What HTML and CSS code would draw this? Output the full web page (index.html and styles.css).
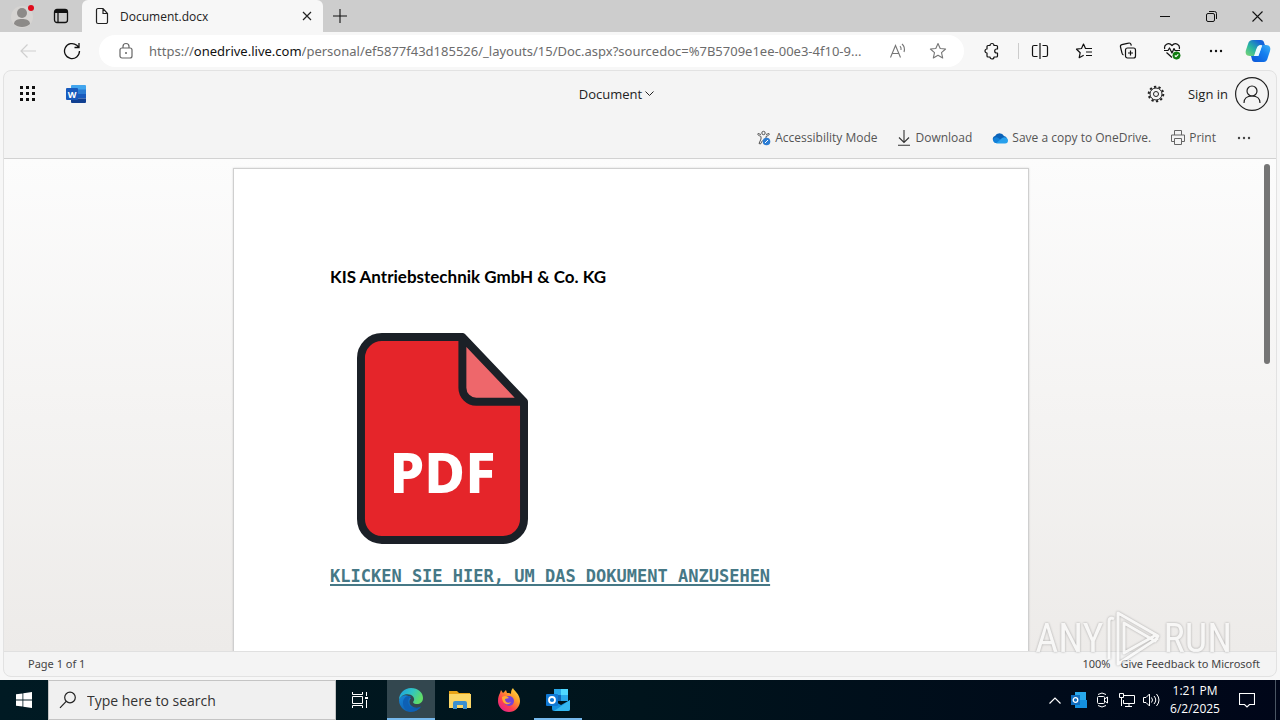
FILE: index.html
```html
<!DOCTYPE html>
<html lang="en">
<head>
    <meta charset="UTF-8">
    <meta name="viewport" content="width=device-width, initial-scale=1.0">
    <title>Document.docx</title>
    <link rel="stylesheet" href="styles.css">
</head>
<body>
    <div class="tab-strip">
        <button class="strip-btn" aria-label="Profile">
            <svg width="28" height="28" viewBox="0 0 28 28"><circle cx="13" cy="15" r="11" fill="#d6d4d2"/><circle cx="13" cy="11" r="5" fill="#8c8a88"/><path d="M5 22c0-4 4-5 8-5s8 1 8 5c-2 2-5 3-8 3s-6-1-8-3z" fill="#8c8a88"/><circle cx="22" cy="6" r="3" fill="#e00b1c"/></svg>
        </button>
        <button class="strip-btn" aria-label="Tab actions">
            <svg width="16" height="16" viewBox="0 0 16 16" fill="none" stroke="#111" stroke-width="1.3"><rect x="1.5" y="1.5" width="13" height="13" rx="2.5"/><path d="M2 3.5h12" stroke-width="3"/><path d="M5 5v9"/></svg>
        </button>
        <div class="tab">
            <svg width="14" height="18" viewBox="0 0 14 18" fill="none" stroke="#222" stroke-width="1.2"><path d="M3 1.5h5l4.500 5v8.500a1.500 1.500 0 0 1-1.500 1.500H3A1.500 1.500 0 0 1 1.500 15V3A1.500 1.500 0 0 1 3 1.500zM8 1.500V6.500h4.500"/></svg>
            <span class="tab-title">Document.docx</span>
            <button class="tab-close" aria-label="Close tab">
                <svg width="10" height="10" viewBox="0 0 10 10" stroke="#222" stroke-width="1.2"><path d="M1 1l8 8M9 1L1 9"/></svg>
            </button>
        </div>
        <button class="new-tab" aria-label="New tab">
            <svg width="14" height="14" viewBox="0 0 14 14" stroke="#111" stroke-width="1.1"><path d="M7 0v14M0 7h14"/></svg>
        </button>
        <div class="window-controls">
            <button aria-label="Minimize"><svg width="10" height="10" viewBox="0 0 10 10" stroke="#111"><path d="M0 5.500h10"/></svg></button>
            <button aria-label="Restore"><svg width="11" height="11" viewBox="0 0 11 11" fill="none" stroke="#111"><rect x=".5" y="2.500" width="8" height="8" rx="1.500"/><path d="M3 .5h5.500a2 2 0 0 1 2 2V8"/></svg></button>
            <button aria-label="Close"><svg width="11" height="11" viewBox="0 0 11 11" stroke="#111" stroke-width="1.1"><path d="M.5.5l10 10M10.500.5l-10 10"/></svg></button>
        </div>
    </div>

    <div class="toolbar">
        <button class="tool" aria-label="Back" disabled>
            <svg width="18" height="16" viewBox="0 0 18 16" fill="none" stroke="#cfcfcf" stroke-width="1.2"><path d="M17 8H2M8.500 1.500L2 8l6.500 6.500"/></svg>
        </button>
        <button class="tool" aria-label="Refresh">
            <svg width="18" height="18" viewBox="0 0 18 18" fill="none" stroke="#111" stroke-width="1.3"><path d="M16.500 9A7.500 7.500 0 1 1 13.800 3.300L15.800 5.200M16 1v4.500h-4.500"/></svg>
        </button>
        <form class="address">
            <svg width="14" height="18" viewBox="0 0 14 18" fill="none" stroke="#666" stroke-width="1.2"><rect x="1" y="6" width="12" height="10" rx="2"/><path d="M4 6V4.500a3 3 0 0 1 6 0V6"/><circle cx="7" cy="11" r="1" fill="#666" stroke="none"/></svg>
            <label class="address-text" for="url">https://<span class="host">onedrive.live.com</span></label>
            <input type="text" id="url" value="/personal/ef5877f43d185526/_layouts/15/Doc.aspx?sourcedoc=%7B5709e1ee-00e3-4f10-9...">
            <button type="button" aria-label="Read aloud">
                <svg width="18" height="16" viewBox="0 0 18 16" fill="none" stroke="#767676" stroke-width="1.1"><path d="M1.500 14.500L6.500 2.500l5 12M3.200 10.500h6.600M11 3.200q1.500 1.500 1 3.800M13 1q3.500 3 2 8"/></svg>
            </button>
            <button type="button" aria-label="Add to favorites">
                <svg width="18" height="18" viewBox="0 0 18 18" fill="none" stroke="#767676" stroke-width="1.1" stroke-linejoin="round"><path d="M9 1.500l2.200 5 5.400.5-4.100 3.600 1.200 5.400L9 13.200 4.300 16l1.200-5.400L1.400 7l5.400-.5z"/></svg>
            </button>
        </form>
        <div class="tools">
            <button class="tool" aria-label="Extensions">
                <svg width="18" height="18" viewBox="0 0 18 18" fill="none" stroke="#111" stroke-width="1.2" stroke-linejoin="round"><path d="M5 3.500h2a2 2 0 0 1 4 0h2.500a1 1 0 0 1 1 1V7h-.8a2 2 0 0 0 0 4h.8v3a1 1 0 0 1-1 1H11a2 2 0 0 1-4 0H5a1 1 0 0 1-1-1v-3a2 2 0 0 1 0-4V4.500a1 1 0 0 1 1-1z"/></svg>
            </button>
            <span class="divider"></span>
            <button class="tool" aria-label="Split screen">
                <svg width="18" height="18" viewBox="0 0 18 18" fill="none" stroke="#111" stroke-width="1.2"><path d="M9 1v16M6.500 3.500H3A1.500 1.500 0 0 0 1.500 5v8A1.500 1.500 0 0 0 3 14.500h3.500M11.500 3.500H15A1.500 1.500 0 0 1 16.500 5v8a1.500 1.500 0 0 1-1.500 1.500h-3.500"/></svg>
            </button>
            <button class="tool" aria-label="Favorites">
                <svg width="18" height="18" viewBox="0 0 18 18" fill="none" stroke="#111" stroke-width="1.2" stroke-linejoin="round"><path d="M11 6.500h-.5L8.500 2 6.500 6.500 1.500 7.200l3.700 3.500-1 5 4.500-2.500M11 6.500h6M11 10h6M11 13.500h6"/></svg>
            </button>
            <button class="tool" aria-label="Collections">
                <svg width="18" height="18" viewBox="0 0 18 18" fill="none" stroke="#111" stroke-width="1.2"><rect x="6.500" y="6" width="10" height="10" rx="2"/><path d="M11.500 8.500v5M9 11h5M4.500 13A2.500 2.500 0 0 1 3 11L1.500 5a2 2 0 0 1 1.400-2.400l6.600-1.500A2 2 0 0 1 12 2.500l.3 1.200"/></svg>
            </button>
            <button class="tool" aria-label="Browser essentials">
                <svg width="18" height="18" viewBox="0 0 18 18" fill="none" stroke="#111" stroke-width="1.2" stroke-linejoin="round"><path d="M1.800 7C.5 3 5.500-.5 9 3.500c3.500-4 8.500-.5 7.200 3.500M1 8.500h4L6.500 6l2.500 5 2-4.500 1 2h5M3.500 10.500L9 15.500"/><circle cx="13.500" cy="13.500" r="3.700" fill="#107c10" stroke="#107c10" stroke-width=".6"/><path d="M11.800 13.500l1.200 1.200 2.300-2.300" stroke="#fff"/></svg>
            </button>
            <button class="tool" aria-label="Settings and more">
                <svg width="16" height="4" viewBox="0 0 16 4" fill="#111"><circle cx="3" cy="2" r="1.200"/><circle cx="8" cy="2" r="1.200"/><circle cx="13" cy="2" r="1.200"/></svg>
            </button>
            <button class="tool copilot" aria-label="Copilot">
                <svg width="26" height="24" viewBox="0 0 26 24">
                    <defs>
                        <linearGradient id="cp1" x1="0" y1="1" x2="1" y2="0"><stop offset="0" stop-color="#7fd672"/><stop offset=".4" stop-color="#2ab7a0"/><stop offset=".8" stop-color="#1664d9"/></linearGradient>
                        <linearGradient id="cp2" x1="0" y1="1" x2="1" y2="0"><stop offset="0" stop-color="#0b53d6"/><stop offset=".6" stop-color="#1480f0"/><stop offset="1" stop-color="#41b3f5"/></linearGradient>
                    </defs>
                    <path d="M8 1h8c3 0 3 3 4 5h-4c-3 0-4 2-5 5l-2 6H5c-4 0-5-3-4-6l2-6c1-3 2-4 5-4z" fill="url(#cp1)"/>
                    <path d="M18 23h-8c-3 0-3-3-4-6h4c3 0 4-2 5-5l2-6h4c4 0 5 3 4 6l-2 6c-1 4-2 5-5 5z" fill="url(#cp2)"/>
                    <path d="M13 7h4l-3.500 10H9.500z" fill="#e8fbff"/>
                </svg>
            </button>
        </div>
    </div>

    <main class="viewer">
        <header class="app-header">
            <div class="app-left">
                <button class="app-btn" aria-label="App launcher">
                    <svg width="16" height="16" viewBox="0 0 16 16" fill="#111"><path d="M0 0h3v3H0zM6 0h3v3H6zM12 0h3v3h-3zM0 6h3v3H0zM6 6h3v3H6zM12 6h3v3h-3zM0 12h3v3H0zM6 12h3v3H6zM12 12h3v3h-3z"/></svg>
                </button>
                <a class="word-logo" href="#" aria-label="Word">
                    <svg width="20" height="18" viewBox="0 0 20 18"><path d="M6 0h13a1 1 0 0 1 1 1v4H5V1a1 1 0 0 1 1-1z" fill="#41a5ee"/><path d="M5 4.500h15V9H5z" fill="#2b7cd3"/><path d="M5 9h15v4.500H5z" fill="#185abd"/><path d="M5 13.500h15V17a1 1 0 0 1-1 1H6a1 1 0 0 1-1-1z" fill="#103f91"/><rect y="3" width="12" height="12" rx="1" fill="#185abd"/><text x="6" y="12.500" class="logo-letter">W</text></svg>
                </a>
            </div>
            <button class="doc-name">Document
                <svg width="9" height="6" viewBox="0 0 9 6" fill="none" stroke="#222"><path d="M.5.5l4 4 4-4"/></svg>
            </button>
            <div class="app-right">
                <button class="app-btn" aria-label="Settings">
                    <svg width="18" height="18" viewBox="0 0 18 18" fill="none" stroke="#222"><circle cx="9" cy="9" r="2.500"/><circle cx="9" cy="9" r="6"/><circle cx="9" cy="9" r="7.300" stroke-width="2" stroke-dasharray="2.300 2.287"/></svg>
                </button>
                <button class="sign-in">Sign in
                    <svg width="34" height="34" viewBox="0 0 34 34" fill="none" stroke="#222" stroke-width="1.200"><circle cx="17" cy="17" r="16.400"/><circle cx="17" cy="14" r="5"/><path d="M9 26c0-5 3.500-7 8-7s8 2 8 7"/></svg>
                </button>
            </div>
        </header>

        <nav class="commands">
            <button>
                <svg width="14" height="16" viewBox="0 0 14 16" fill="none" stroke="#555"><circle cx="6.500" cy="3" r="1.700"/><path d="M1 3.500c-1 1.500 1 2 3 3V9l-2 4.500 1.500.5 2-3.500M12 3.500c1 1.500-1 2-3 3V8M1 3.500l3 1M12 3.500l-3 1" /><circle cx="9.500" cy="11.500" r="3.800" fill="#2b7cd3" stroke="none"/><path d="M8 13l3-3" stroke="#fff"/></svg>
                Accessibility Mode
            </button>
            <button>
                <svg width="14" height="16" viewBox="0 0 14 16" fill="none" stroke="#333" stroke-width="1.100"><path d="M7 0v12.500M2 7.500l5 5 5-5M1 15.300h12"/></svg>
                Download
            </button>
            <button>
                <svg width="16" height="12" viewBox="0 0 16 12"><path d="M1 8a3 3 0 0 1 2-4 5 5 0 0 1 9 0 3.500 3.500 0 0 1 2 6L8 11z" fill="#0a62b8"/><path d="M3 11a3 3 0 0 1-1-5c2-1.500 4-.5 5 .5l6 4.500z" fill="#1280d8"/><path d="M4 11.500l6-5.500c3-2 6 0 6 2.500a3 3 0 0 1-3 3z" fill="#28a0ec"/></svg>
                Save a copy to OneDrive.
            </button>
            <button>
                <svg width="14" height="15" viewBox="0 0 14 15" fill="none" stroke="#666"><path d="M3.500 5V.5h7V5M3.500 11.500h-3V5h13v6.500h-3M3.500 8.500h7v6h-7z"/></svg>
                Print
            </button>
            <button aria-label="More options">
                <svg width="16" height="4" viewBox="0 0 16 4" fill="#444"><circle cx="3" cy="2" r="1.200"/><circle cx="8" cy="2" r="1.200"/><circle cx="13" cy="2" r="1.200"/></svg>
            </button>
        </nav>

        <section class="canvas">
            <article class="page">
                <h1>KIS Antriebstechnik GmbH &amp; Co. KG</h1>
                <svg class="pdf-icon" width="171" height="211" viewBox="0 0 172 212" role="img" aria-label="PDF">
                    <path d="M24 4h82l62 65v118a21 21 0 0 1-21 21H25a21 21 0 0 1-21-21V25A21 21 0 0 1 24 4z" fill="#e5252a"/>
                    <path d="M106 4v51a14 14 0 0 0 14 14h48z" fill="#ee676b"/>
                    <path d="M25 4h81l62 65v118a21 21 0 0 1-21 21H25a21 21 0 0 1-21-21V25A21 21 0 0 1 25 4zM106 4v51a14 14 0 0 0 14 14h48" fill="none" stroke="#1b2027" stroke-width="8" stroke-linejoin="round"/>
                    <text x="86" y="161" class="pdf-label">PDF</text>
                </svg>
                <a class="doc-link" href="#">KLICKEN SIE HIER, UM DAS DOKUMENT ANZUSEHEN</a>
            </article>
            <span class="scroll-thumb"></span>
        </section>

        <footer class="status">
            <span>Page 1 of 1</span>
            <div class="status-right">
                <span>100%</span>
                <a href="#">Give Feedback to Microsoft</a>
            </div>
        </footer>
    </main>

    <div class="taskbar">
        <button class="start" aria-label="Start">
            <svg width="16" height="16" viewBox="0 0 16 16" fill="#fff"><path d="M0 2.300L6.500 1.400v6.200H0zM7.300 1.300L16 0v7.600H7.300zM0 8.400h6.500v6.200L0 13.700zM7.300 8.400H16V16l-8.700-1.300z"/></svg>
        </button>
        <div class="search">
            <svg width="18" height="18" viewBox="0 0 18 18" fill="none" stroke="#222" stroke-width="1.200"><circle cx="11" cy="6.500" r="5.300"/><path d="M7.200 10.300L1 16.800"/></svg>
            <input type="text" aria-label="Search" placeholder="Type here to search">
        </div>
        <div class="apps">
            <button aria-label="Task view">
                <svg width="18" height="16" viewBox="0 0 18 16" fill="none" stroke="#fff"><path d="M1.500 0v2.500h10V0M1.500 16v-2.500h10V16M1.500 4.500h10v7h-10zM15.500 0v4M15.500 8v8"/><path d="M14 5h3v2h-3z" fill="#fff" stroke="none"/></svg>
            </button>
            <button class="active" aria-label="Edge">
                <svg width="24" height="24" viewBox="0 0 24 24">
                    <defs>
                        <linearGradient id="edge1" x1="0" y1="0" x2="1" y2=".4"><stop offset="0" stop-color="#1b9de2"/><stop offset=".55" stop-color="#30c4c4"/><stop offset="1" stop-color="#5fdc68"/></linearGradient>
                        <linearGradient id="edge2" x1="0" y1="0" x2="1" y2="1"><stop offset="0" stop-color="#1687d9"/><stop offset="1" stop-color="#0c4f9e"/></linearGradient>
                    </defs>
                    <path d="M0 12a12 12 0 0 0 15 11.600c3-.8 5.500-2.600 7-5-3 1.500-7 1.500-9.500-.8C10 15.500 10 12 12 10.500 9 6 3 6 0 12z" fill="url(#edge2)"/>
                    <path d="M0 12C0 5 5.500 0 12 0c7 0 12 4.500 12 10 0 4-3 6-6 6-3.500 0-4.500-1.500-3.500-2.700 1-1.300.8-3.300-.5-4.800C11 5 3 5 0 12z" fill="url(#edge1)"/>
                    <path d="M4 15c0-5 4-8 8-6.500-4 2-4 10 2 12.500 2 .8 5 .3 8-2.400-5 8-18 6-18-3.600z" fill="#0e60b4"/>
                </svg>
            </button>
            <button aria-label="File Explorer">
                <svg width="22" height="20" viewBox="0 0 22 20"><path d="M0 1h8l2 2h11v4H0z" fill="#e8a317"/><path d="M0 4h22v14H0z" fill="#fbd667"/><path d="M4 19v-6a2 2 0 0 1 2-2h10a2 2 0 0 1 2 2v6h-4v-4H8v4z" fill="#3a8fd0"/></svg>
            </button>
            <button aria-label="Firefox">
                <svg width="24" height="24" viewBox="0 0 24 24">
                    <defs><linearGradient id="fox" x1="1" y1="0" x2=".2" y2="1"><stop offset="0" stop-color="#fff04a"/><stop offset=".4" stop-color="#ff9a2a"/><stop offset=".7" stop-color="#ff4050"/><stop offset="1" stop-color="#e3208e"/></linearGradient></defs>
                    <path d="M1 13C1 9 2 7 3 5l1-3 2 3 3-3 1 3c2 0 3 0 4 1 0-2 0-4 2-6 1 3 7 6 7 13a11 11 0 0 1-22 0z" fill="url(#fox)"/>
                    <circle cx="12" cy="13" r="5" fill="#7542d8"/><path d="M5 9c3-2 5-1 7 1l-4 1c0 3 3 5 6 3-2 4-9 3-9-5z" fill="#ffac32"/>
                </svg>
            </button>
            <button class="running" aria-label="Outlook">
                <svg width="24" height="22" viewBox="0 0 24 22"><rect x="8" width="14" height="12" fill="#1066b5"/><path d="M8 0h7v6H8zM15 6h7v6h-7z" fill="#28a8ea"/><path d="M15 0h7v6h-7z" fill="#50d9ff"/><path d="M6 11l9 5 9-5v9a2 2 0 0 1-2 2H8a2 2 0 0 1-2-2z" fill="#1490df"/><path d="M24 11v9a2 2 0 0 1-2 2H8z" fill="#35b8f1"/><rect y="5" width="12" height="12" rx="1" fill="#0f78d4"/><circle cx="6" cy="11" r="3" fill="none" stroke="#fff" stroke-width="1.800"/></svg>
            </button>
        </div>
        <div class="tray">
            <button aria-label="Show hidden icons"><svg width="12" height="7" viewBox="0 0 12 7" fill="none" stroke="#fff" stroke-width="1.200"><path d="M.5 6.500L6 1l5.500 5.500"/></svg></button>
            <button aria-label="Outlook"><svg width="16" height="16" viewBox="0 0 16 16"><rect x="4" width="11" height="15" fill="#28a8ea"/><path d="M4 8l12 0v8H4z" fill="#1490df"/><rect y="3" width="9" height="10" fill="#0f6cbd"/><circle cx="4.500" cy="8" r="2.300" fill="none" stroke="#fff" stroke-width="1.300"/></svg></button>
            <button aria-label="Meet now"><svg width="14" height="16" viewBox="0 0 14 16" fill="none" stroke="#fff"><rect x="1.500" y="4.500" width="7" height="7" rx="1"/><path d="M8.500 7l3-2v6l-3-2M2 2.500q4-3 8 0M2 13.500q4 3 8 0"/></svg></button>
            <button aria-label="Network"><svg width="16" height="14" viewBox="0 0 16 14" fill="none" stroke="#fff"><path d="M5 2.500h10.500v8H4.500V7M10 10.500v3M6 13.500h7M.5.5h4v4h-4zM2.500 4.500v8.500"/></svg></button>
            <button aria-label="Volume"><svg width="17" height="14" viewBox="0 0 17 14" fill="none" stroke="#fff"><path d="M.5 4.500H3l3.500-3.500v12L3 9.500H.5zM8.500 4.500q2 2.500 0 5M11 3q3.500 4 0 8M13.500 1q5 6 0 12"/></svg></button>
        </div>
        <button class="clock">1:21 PM<br>6/2/2025</button>
        <button class="notify" aria-label="Notifications"><svg width="16" height="16" viewBox="0 0 16 16" fill="none" stroke="#fff" stroke-width="1.100"><path d="M.5 1.500h15v11h-5L8 15l-2.500-2.500h-5z"/></svg></button>
        <span class="show-desktop"></span>
    </div>

    <div class="watermark">
        <span>ANY</span>
        <svg width="56" height="58" viewBox="0 0 56 58" fill="none" stroke="#fff" stroke-width="3" stroke-linejoin="round"><path d="M3 49V11q0-3 3-3l2 1"/><path d="M12 50V3l40 23-3 5-31-18v30L50 25"/><path d="M12 50v4l40-26"/></svg>
        <span>RUN</span>
    </div>
</body>
</html>
```
FILE: styles.css
```css
* {
    box-sizing: border-box;
}

body {
    margin: 0;
    min-height: 100vh;
    height: 100vh;
    display: flex;
    flex-direction: column;
    font-family: "Open Sans", "Noto Sans", sans-serif;
    font-size: 12px;
    color: #222;
    background-color: #f7f7f7;
    overflow: hidden;
}

button,
input {
    font: inherit;
    color: inherit;
    background: none;
    border: none;
    padding: 0;
    margin: 0;
    outline: none;
}

button {
    display: flex;
    align-items: center;
    justify-content: center;
}

svg {
    display: block;
    flex-shrink: 0;
}

a {
    color: inherit;
    text-decoration: none;
}

/* tab strip */
.tab-strip {
    display: flex;
    height: 32px;
    flex-shrink: 0;
    background-color: #cdcdcd;
    padding-left: 4px;
}

.strip-btn {
    width: 38px;
}

.tab {
    display: flex;
    align-items: center;
    gap: 11px;
    width: 241px;
    margin-left: 2px;
    padding: 0 10px 0 13px;
    background-color: #f7f7f7;
    border-radius: 6px 6px 0 0;
}

.tab-title {
    flex: 1;
}

.tab-close {
    width: 12px;
    height: 16px;
}

.new-tab {
    width: 34px;
}

.window-controls {
    display: flex;
    margin-left: auto;
}

.window-controls button {
    width: 46px;
}

/* toolbar */
.toolbar {
    display: flex;
    align-items: center;
    height: 38px;
    flex-shrink: 0;
    padding: 0 0 0 6px;
    background-color: #f7f7f7;
}

.tool {
    width: 44px;
    height: 32px;
}

.address {
    display: flex;
    align-items: center;
    flex: 1;
    min-width: 0;
    height: 32px;
    margin-left: 5px;
    padding: 0 16px 0 20px;
    background-color: #fff;
    border-radius: 16px;
    font-family: "Noto Sans", sans-serif;
    font-size: 13px;
    color: #6c6c6c;
}

.address-text {
    margin-left: 16px;
}

.address .host {
    color: #111;
}

.address input {
    flex: 1;
    min-width: 0;
    text-overflow: ellipsis;
}

.address button {
    width: 20px;
    margin-left: 10px;
}

.address button + button {
    margin-left: 20px;
}

.tools {
    display: flex;
    align-items: center;
    padding-left: 6px;
}

.divider {
    width: 1px;
    height: 16px;
    margin: 0 -1px 0 4px;
    background-color: #ccc;
}

.copilot {
    width: 42px;
    padding-right: 2px;
}

/* document viewer */
.viewer {
    display: flex;
    flex-direction: column;
    flex: 1;
    min-height: 0;
    margin: 0 3px 3px;
    border: 1px solid #e2e2e2;
    border-radius: 8px;
    background-color: #f4f4f4;
    overflow: hidden;
}

.app-header {
    display: grid;
    grid-template-columns: 1fr auto 1fr;
    align-items: center;
    height: 46px;
    flex-shrink: 0;
    padding: 0 7px 0 12px;
    font-size: 13px;
}

.app-left,
.app-right {
    display: flex;
    align-items: center;
}

.app-left {
    gap: 26px;
}

.app-right {
    justify-content: flex-end;
    gap: 20px;
}

.app-btn {
    width: 24px;
    height: 24px;
}

.logo-letter {
    font: bold 9px "Open Sans", sans-serif;
    fill: #fff;
    text-anchor: middle;
}

.doc-name {
    gap: 3px;
    margin-right: 52px;
}

.sign-in {
    gap: 7px;
}

.commands {
    display: flex;
    align-items: center;
    justify-content: flex-end;
    gap: 20px;
    height: 42px;
    flex-shrink: 0;
    padding-right: 24px;
    border-bottom: 1px solid #d2d2d2;
    color: #555;
}

.commands button {
    gap: 4px;
}

.canvas {
    position: relative;
    flex: 1;
    min-height: 0;
    padding: 9px 18px 0 0;
    background: linear-gradient(#fcfcfc, #edebe9);
    overflow: hidden;
}

.page {
    width: 796px;
    max-width: 100%;
    min-height: 1123px;
    margin: 0 auto;
    padding: 96px 96px 0 96px;
    background-color: #fff;
    border: 1px solid #cfcfcf;
    box-shadow: 0 0 2px rgba(0, 0, 0, 0.15);
}

.page h1 {
    margin: 0;
    font: bold 17px/24px Lato, sans-serif;
    color: #000;
}

.pdf-icon {
    margin: 44px 0 20px 27px;
}

.pdf-label {
    font: 800 56px "Noto Sans", sans-serif;
    fill: #fff;
    text-anchor: middle;
}

.doc-link {
    font: bold 17px/24px "DejaVu Sans Mono", "Liberation Mono", monospace;
    color: #467886;
    text-decoration: underline;
    text-decoration-thickness: 2px;
    text-underline-offset: 2px;
}

.scroll-thumb {
    position: absolute;
    top: 5px;
    right: 6px;
    width: 6px;
    height: 200px;
    border-radius: 3px;
    background-color: #757575;
}

.status {
    display: flex;
    justify-content: space-between;
    align-items: center;
    height: 25px;
    flex-shrink: 0;
    padding: 0 16px 2px 24px;
    border-top: 1px solid #e0e0e0;
    font-family: "Noto Sans", sans-serif;
    font-size: 11px;
    color: #444;
}

.status-right {
    display: flex;
    gap: 10px;
}

/* taskbar */
.taskbar {
    display: flex;
    height: 40px;
    flex-shrink: 0;
    background: linear-gradient(90deg, #001a23, #00141c 50%, #000619);
    color: #fff;
}

.start {
    width: 48px;
}

.search {
    display: flex;
    align-items: center;
    gap: 10px;
    width: 288px;
    padding: 0 10px;
    background-color: #f0f0f0;
    border: 1px solid #c4c4c4;
    color: #333;
    font-size: 14px;
}

.search input {
    flex: 1;
    min-width: 0;
}

.search input::placeholder {
    color: #333;
    opacity: 1;
}

.apps {
    display: flex;
    gap: 1px;
}

.apps button {
    width: 48px;
    border-bottom: 2px solid transparent;
    border-top: 2px solid transparent;
}

.apps .active {
    margin-left: 2px;
    background-color: #33474f;
    border-bottom-color: #76b9ed;
}

.apps .running {
    border-bottom-color: #76b9ed;
}

.tray {
    display: flex;
    margin-left: auto;
}

.tray button {
    width: 24px;
}

.clock {
    width: 64px;
    line-height: 18px;
}

.notify {
    width: 40px;
}

.show-desktop {
    width: 5px;
    margin-left: 8px;
    border-left: 1px solid #4a5563;
}

/* overlay logo in the lower right corner */
.watermark {
    position: absolute;
    right: 48px;
    bottom: 52px;
    display: flex;
    align-items: center;
    gap: 2px;
    font: 400 40px/48px "Roboto Condensed", "Open Sans Condensed", "Liberation Sans Narrow", sans-serif;
    color: #fff;
    opacity: 0.6;
    filter: drop-shadow(0 0 1px #777);
    pointer-events: none;
}
```
